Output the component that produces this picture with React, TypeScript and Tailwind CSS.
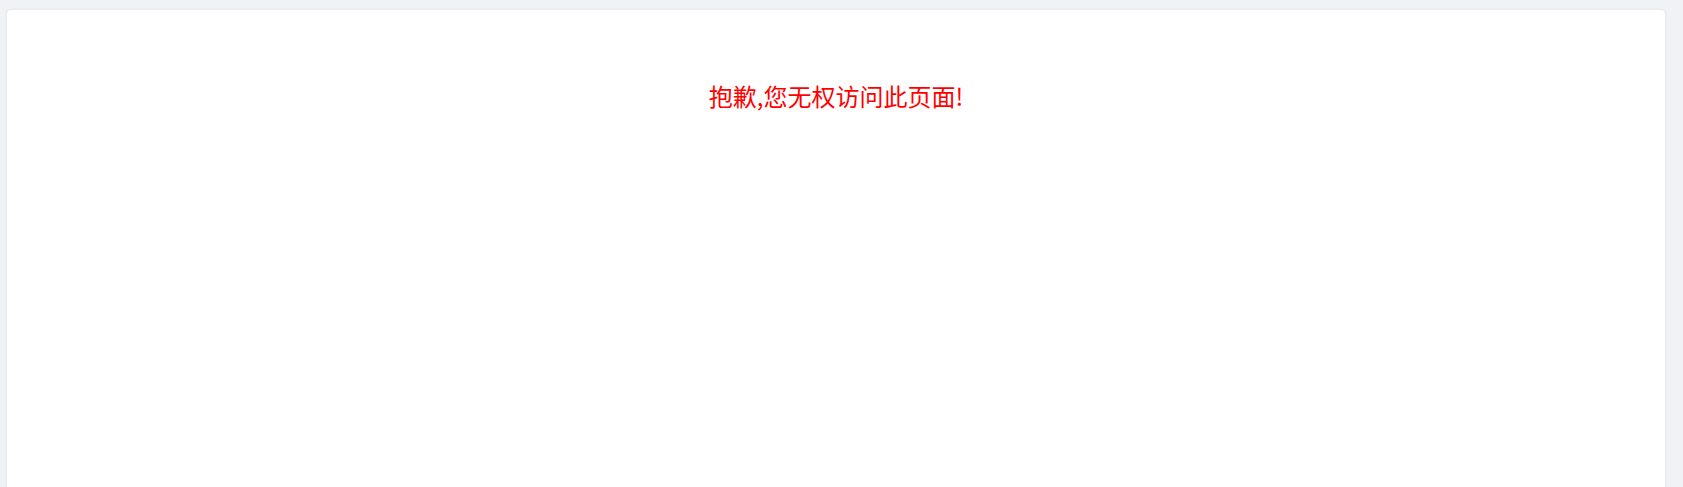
export default function App() {
  return (
    <div
      className="min-h-screen bg-[#f0f2f5] pt-[9px] pl-[6px] pr-[17px]"
      style={{ fontFamily: '"Noto Sans CJK SC", "Noto Sans", sans-serif' }}
    >
      <div className="min-h-[490px] rounded-[5px] border border-[#e8eaee] bg-white shadow-[0_0_3px_rgba(0,0,0,0.04)]">
        <div className="pt-[68px] text-center text-[24px] leading-[36px] text-[#ff0000]">
          抱歉,您无权访问此页面!
        </div>
      </div>
    </div>
  );
}
